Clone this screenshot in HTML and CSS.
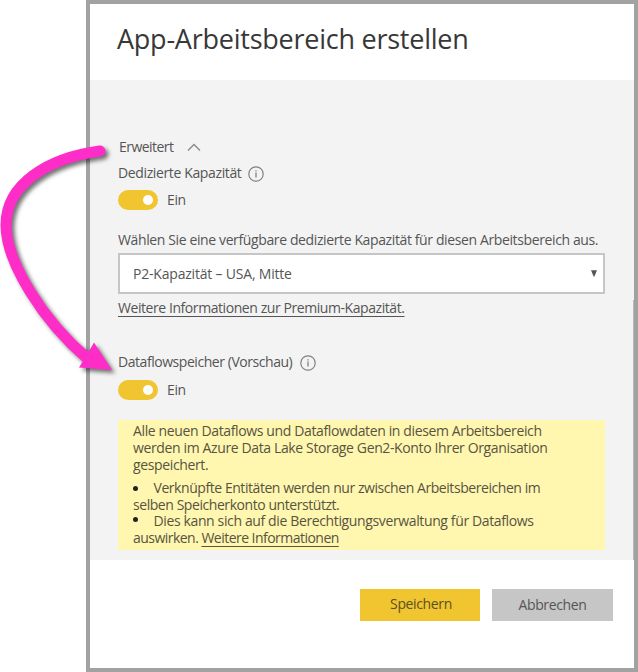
FILE: index.html
```html
<!DOCTYPE html>
<html lang="de">
<head>
<meta charset="utf-8">
<title>App-Arbeitsbereich erstellen</title>
<link rel="stylesheet" href="styles.css">
</head>
<body>
<main class="dialog">
  <header class="header"><h1 class="title">App-Arbeitsbereich erstellen</h1></header>
  <section class="content">
    <div class="row advanced">
      <span class="label t-adv">Erweitert</span>
      <svg class="chevron" width="14" height="9" viewBox="0 0 14 9"><path d="M1 7.500 7 1.500l6 6" fill="none" stroke="#888" stroke-width="1.3"/></svg>
    </div>
    <div class="row dedicated">
      <span class="label t-ded">Dedizierte Kapazität</span>
      <svg class="info" width="16" height="16" viewBox="0 0 16 16"><circle cx="8" cy="8" r="7.2" fill="none" stroke="#808080" stroke-width="1.2"/><path d="M8 6.600V11.500M8 4.200v1.300" stroke="#808080" stroke-width="1.300"/></svg>
    </div>
    <div class="switch-row">
      <span class="switch"></span><span class="label t-on">Ein</span>
    </div>
    <div class="row choose"><span class="label t-choose">Wählen Sie eine verfügbare dedizierte Kapazität für diesen Arbeitsbereich aus.</span></div>
    <div class="select">
      <span class="t-select">P2-Kapazität – USA, Mitte</span>
      <svg class="caret" width="6" height="7" viewBox="0 0 6 7"><path d="M0 .3h6L3.400 6.500h-.8z" fill="#555"/></svg>
    </div>
    <div class="row premium"><a class="label link t-premium">Weitere Informationen zur Premium-Kapazität.</a></div>
    <div class="row storage">
      <span class="label t-storage">Dataflowspeicher (Vorschau)</span>
      <svg class="info" width="16" height="16" viewBox="0 0 16 16"><circle cx="8" cy="8" r="7.2" fill="none" stroke="#808080" stroke-width="1.2"/><path d="M8 6.600V11.500M8 4.200v1.300" stroke="#808080" stroke-width="1.300"/></svg>
    </div>
    <div class="switch-row">
      <span class="switch"></span><span class="label t-on">Ein</span>
    </div>
    <div class="notice">
      <p class="intro"><span class="t-n1">Alle neuen Dataflows und Dataflowdaten in diesem Arbeitsbereich</span><br><span class="t-n2">werden im Azure Data Lake Storage Gen2-Konto Ihrer Organisation</span><br><span class="t-n3">gespeichert.</span></p>
      <ul class="points">
        <li class="point"><span class="bullet"></span><span class="t-n4">Verknüpfte Entitäten werden nur zwischen Arbeitsbereichen im</span><br><span class="t-n5">selben Speicherkonto unterstützt.</span></li>
        <li class="point"><span class="bullet raised"></span><span class="t-n6">Dies kann sich auf die Berechtigungsverwaltung für Dataflows</span><br><span class="t-n7">auswirken. <a class="link">Weitere Informationen</a></span></li>
      </ul>
    </div>
  </section>
  <footer class="footer">
    <button class="button primary">Speichern</button>
    <button class="button secondary">Abbrechen</button>
  </footer>
</main>
<svg class="arrow" width="130" height="250" viewBox="0 135 130 250">
  <path d="M100 151C48 158 6 184 6 225C6 262 43 321 88 359" fill="none" stroke="#ff2dc8" stroke-width="11" stroke-linecap="round"/>
  <path d="M94 342.500 112 370 79 367.500z" fill="#ff2dc8"/>
</svg>
</body>
</html>
```
FILE: styles.css
```css
* { box-sizing: border-box; }
body {
  margin: 0;
  width: 638px;
  height: 672px;
  overflow: hidden;
  background: #fff;
  color: #555;
  font: 14px/17px "Open Sans", "Noto Sans", sans-serif;
  letter-spacing: -0.37px;
  white-space: nowrap;
}
.dialog {
  display: flex;
  flex-direction: column;
  width: 552px;
  height: 672px;
  margin-left: 86px;
  border: 4px solid #a2a2a2;
  background: #fff;
}
.header { height: 76px; padding: 15px 0 0 27px; }
.title {
  margin: 0;
  color: #383838;
  font-size: 27px;
  font-weight: 400;
  line-height: 40px;
  letter-spacing: -0.24px;
}
.content {
  height: 480px;
  padding: 59px 29px 0 28px;
  background: linear-gradient(#b8b8b8, #b8b8b8) right bottom / 1px 260px no-repeat #f3f3f3;
}
.row { display: flex; align-items: center; height: 17px; }
.label { padding-bottom: 2px; }
.advanced { padding-left: 1px; gap: 14px; }
.dedicated { margin-top: 9px; gap: 7px; }
.switch-row { display: flex; align-items: center; gap: 9px; height: 20px; margin-top: 8px; }
.switch {
  display: flex;
  align-items: center;
  justify-content: flex-end;
  width: 40px;
  height: 20px;
  padding-right: 5px;
  border-radius: 10px;
  background: #f0c530;
}
.switch::after { content: ""; width: 10.5px; height: 10.5px; border-radius: 50%; background: #fff; }
.choose { margin-top: 22px; }
.select {
  display: flex;
  align-items: center;
  justify-content: space-between;
  height: 41px;
  margin-top: 4px;
  padding: 0 6px 0 13px;
  border: 2px solid #c6c6c6;
  background: #fff;
}
.caret { margin-bottom: 1px; }
.premium { margin-top: 6px; }
.link { text-decoration: underline; text-decoration-thickness: 1px; text-underline-offset: 3px; text-decoration-skip-ink: none; }
.storage { margin-top: 37px; gap: 8px; }
.storage + .switch-row { margin-top: 9px; }
.notice { height: 130px; margin-top: 20px; padding: 2px 15px; background: #fff6b0; color: #57543f; }
.intro { margin: 0; }
.points { margin: 7px 0 0; padding: 0; list-style: none; }
.point { line-height: 16.5px; }
.bullet {
  display: inline-block;
  width: 5px;
  height: 5px;
  margin-right: 15.5px;
  border-radius: 50%;
  background: #222;
  vertical-align: 2px;
}
.raised { vertical-align: 4px; }
.footer { display: flex; justify-content: flex-end; gap: 12px; padding: 29px 21px 0 0; }
.button {
  width: 120px;
  height: 32px;
  padding: 0 0 1px;
  border: 0;
  color: #555;
  font: inherit;
  letter-spacing: inherit;
}
.primary { padding: 0 0 3px 2px; background: #f0c530; color: #5b4f26; }
.secondary { width: 121px; background: #c6c6c6; }
.arrow { position: absolute; left: 0; top: 135px; filter: drop-shadow(3px 3px 2px rgba(0, 0, 0, .55)); }
.t-adv { letter-spacing: -0.55px; }
.t-choose { letter-spacing: -0.38px; }
.t-select { letter-spacing: -0.2px; }
.t-premium { letter-spacing: -0.43px; }
.t-storage { letter-spacing: -0.45px; }
.t-n4, .t-n5 { letter-spacing: -0.44px; }
.t-n7 { letter-spacing: -0.53px; }
```
